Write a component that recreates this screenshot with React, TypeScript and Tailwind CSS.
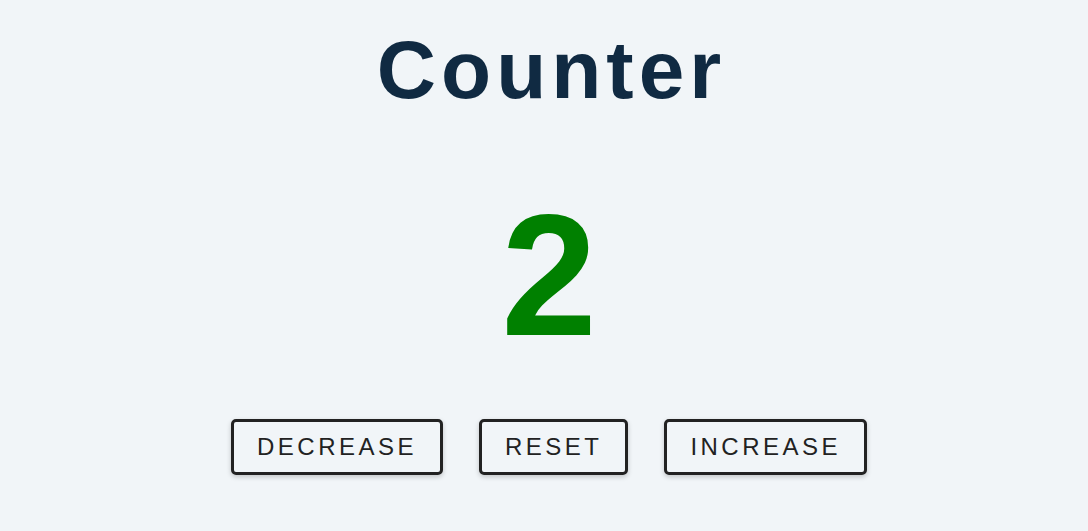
import { useState } from 'react'

export default function App() {
  const [count, setCount] = useState(2)

  const color = count > 0 ? 'text-[#008000]' : count < 0 ? 'text-[#ff0000]' : 'text-[#222222]'

  return (
    <main className="min-h-[531px] w-full bg-[#f1f5f8] font-['Liberation_Sans',Arial,sans-serif]">
      <div className="flex flex-col items-center pl-[10px] pt-[29px]">
        <h1 className="text-[82px] font-bold leading-none tracking-[5px] text-[#102a42] indent-[5px]">
          Counter
        </h1>

        <span className={`mt-[78px] text-[172px] font-bold leading-none ${color}`}>{count}</span>

        <div className="mt-[58px] flex items-center gap-[36px]">
          <CounterButton label="decrease" onClick={() => setCount((c) => c - 1)} />
          <CounterButton label="reset" onClick={() => setCount(0)} />
          <CounterButton label="increase" onClick={() => setCount((c) => c + 1)} />
        </div>
      </div>
    </main>
  )
}

function CounterButton({ label, onClick }: { label: string; onClick: () => void }) {
  return (
    <button
      type="button"
      onClick={onClick}
      className="rounded-[5px] border-[3px] border-[#222222] bg-transparent px-[23px] py-[13px] text-[24px] uppercase leading-none tracking-[0.145em] text-[#222222] shadow-[0_2px_5px_rgba(0,0,0,0.2)] transition hover:bg-[#222222] hover:text-white"
    >
      {label}
    </button>
  )
}
